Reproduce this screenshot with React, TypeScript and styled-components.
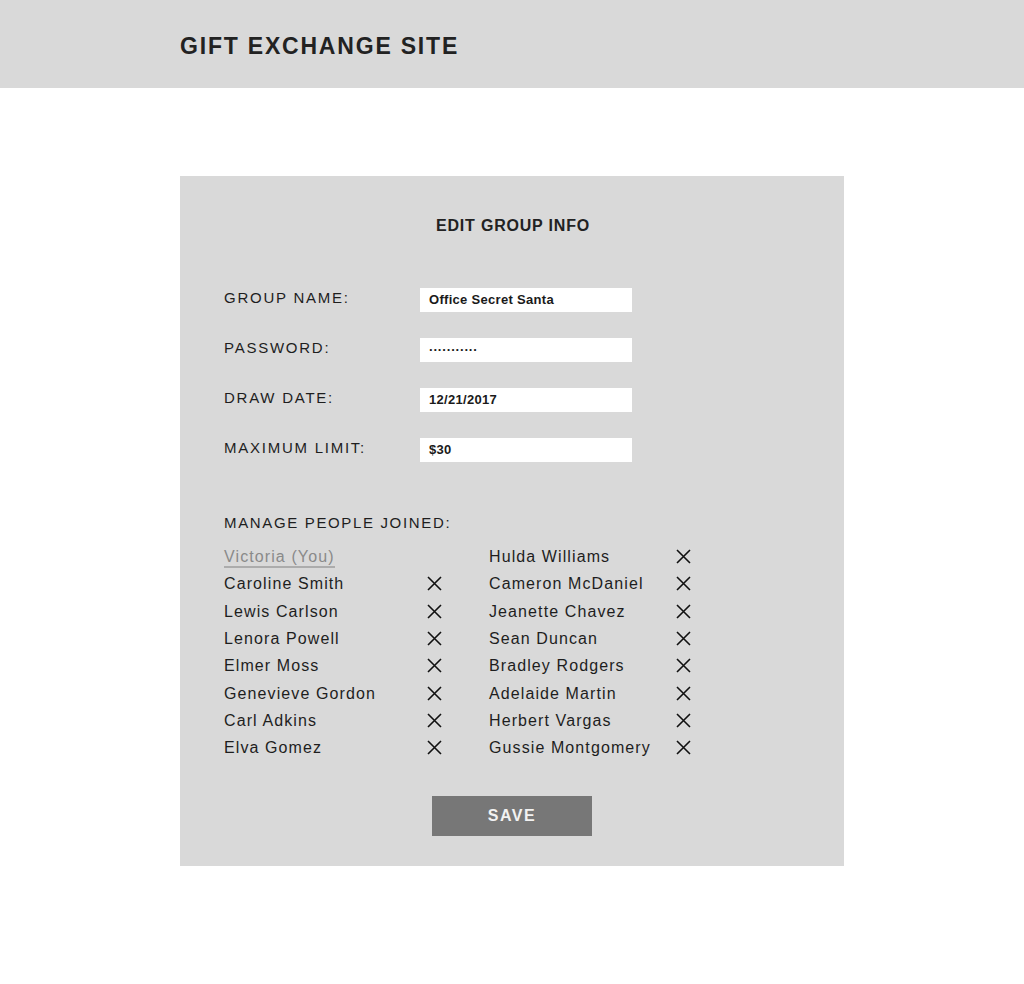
import React from "react";
import styled, { createGlobalStyle } from "styled-components";

const Global = createGlobalStyle`
  html, body { margin: 0; padding: 0; background: #ffffff; }
  body { font-family: "Liberation Sans", Arial, sans-serif; color: #222; }
  * { box-sizing: border-box; }
`;

const Header = styled.header`
  height: 88px;
  background: #d9d9d9;
  display: flex;
  align-items: center;
  padding-left: 180px;
`;

const SiteTitle = styled.h1`
  margin: 0;
  font-size: 23px;
  font-weight: 700;
  letter-spacing: 1.8px;
  line-height: 28px;
  color: #222;
  padding-top: 4px;
`;

const Main = styled.main`
  padding-top: 88px;
  display: flex;
  justify-content: center;
`;

const Card = styled.section`
  width: 664px;
  background: #d9d9d9;
  padding: 39px 44px 30px;
  display: flex;
  flex-direction: column;
`;

const CardTitle = styled.h2`
  margin: 0;
  padding-left: 2px;
  text-align: center;
  font-size: 16px;
  line-height: 21px;
  font-weight: 700;
  letter-spacing: 0.8px;
  color: #222;
`;

const Form = styled.div`
  margin-top: 52px;
  display: flex;
  flex-direction: column;
  gap: 26px;
`;

const FieldRow = styled.div`
  display: flex;
  height: 24px;
`;

const Label = styled.label`
  width: 196px;
  font-size: 15px;
  line-height: 19px;
  letter-spacing: 1.75px;
  color: #1e1e1e;
`;

const Input = styled.div<{ $masked?: boolean }>`
  width: 212px;
  height: 24px;
  background: #ffffff;
  padding-left: 9px;
  font-size: 13px;
  font-weight: 700;
  line-height: 24px;
  letter-spacing: ${(p) => (p.$masked ? "0.1px" : "0.3px")};
  color: #1a1a1a;
`;

const SectionLabel = styled.div`
  margin-top: 51px;
  font-size: 15px;
  line-height: 19px;
  letter-spacing: 1.65px;
  color: #1e1e1e;
`;

const PeopleGrid = styled.div`
  margin-top: 11px;
  display: grid;
  grid-template-columns: 202px 63px 186px 15px;
  grid-auto-rows: 27.3px;
  align-items: center;
`;

const Name = styled.div<{ $self?: boolean }>`
  font-size: 16px;
  line-height: 27px;
  letter-spacing: 1.1px;
  color: ${(p) => (p.$self ? "#8a8a8a" : "#1e1e1e")};
  white-space: nowrap;
`;

const SelfMark = styled.span`
  padding-bottom: 1px;
  border-bottom: 2px solid #acacac;
`;

const RemoveButton = styled.button`
  width: 15px;
  height: 15px;
  margin-left: 1px;
  padding: 0;
  border: 0;
  background: none;
  display: flex;
  justify-self: start;
  cursor: pointer;
`;

const Empty = styled.div``;

const SaveButton = styled.button`
  margin: 35px auto 0;
  width: 160px;
  height: 40px;
  border: 0;
  background: #777777;
  color: #f2f2f2;
  font-family: "Liberation Sans", Arial, sans-serif;
  font-size: 16px;
  font-weight: 700;
  letter-spacing: 1.5px;
  cursor: pointer;
`;

const XIcon = () => (
  <svg width="15" height="15" viewBox="0 0 15 15">
    <path d="M1 1 L14 14 M14 1 L1 14" stroke="#111" strokeWidth="1.6" fill="none" />
  </svg>
);

const fields = [
  { label: "GROUP NAME:", value: "Office Secret Santa" },
  { label: "PASSWORD:", value: "···········", masked: true },
  { label: "DRAW DATE:", value: "12/21/2017" },
  { label: "MAXIMUM LIMIT:", value: "$30" },
];

const left = [
  "Victoria (You)",
  "Caroline Smith",
  "Lewis Carlson",
  "Lenora Powell",
  "Elmer Moss",
  "Genevieve Gordon",
  "Carl Adkins",
  "Elva Gomez",
];

const right = [
  "Hulda Williams",
  "Cameron McDaniel",
  "Jeanette Chavez",
  "Sean Duncan",
  "Bradley Rodgers",
  "Adelaide Martin",
  "Herbert Vargas",
  "Gussie Montgomery",
];

export default function App() {
  return (
    <>
      <Global />
      <Header>
        <SiteTitle>GIFT EXCHANGE SITE</SiteTitle>
      </Header>
      <Main>
        <Card>
          <CardTitle>EDIT GROUP INFO</CardTitle>
          <Form>
            {fields.map((f) => (
              <FieldRow key={f.label}>
                <Label>{f.label}</Label>
                <Input $masked={f.masked}>{f.value}</Input>
              </FieldRow>
            ))}
          </Form>
          <SectionLabel>MANAGE PEOPLE JOINED:</SectionLabel>
          <PeopleGrid>
            {left.map((name, i) => (
              <React.Fragment key={name}>
                {i === 0 ? (
                  <Name $self>
                    <SelfMark>{name}</SelfMark>
                  </Name>
                ) : (
                  <Name>{name}</Name>
                )}
                {i === 0 ? (
                  <Empty />
                ) : (
                  <RemoveButton aria-label={`Remove ${name}`}>
                    <XIcon />
                  </RemoveButton>
                )}
                <Name>{right[i]}</Name>
                <RemoveButton aria-label={`Remove ${right[i]}`}>
                  <XIcon />
                </RemoveButton>
              </React.Fragment>
            ))}
          </PeopleGrid>
          <SaveButton>SAVE</SaveButton>
        </Card>
      </Main>
    </>
  );
}
